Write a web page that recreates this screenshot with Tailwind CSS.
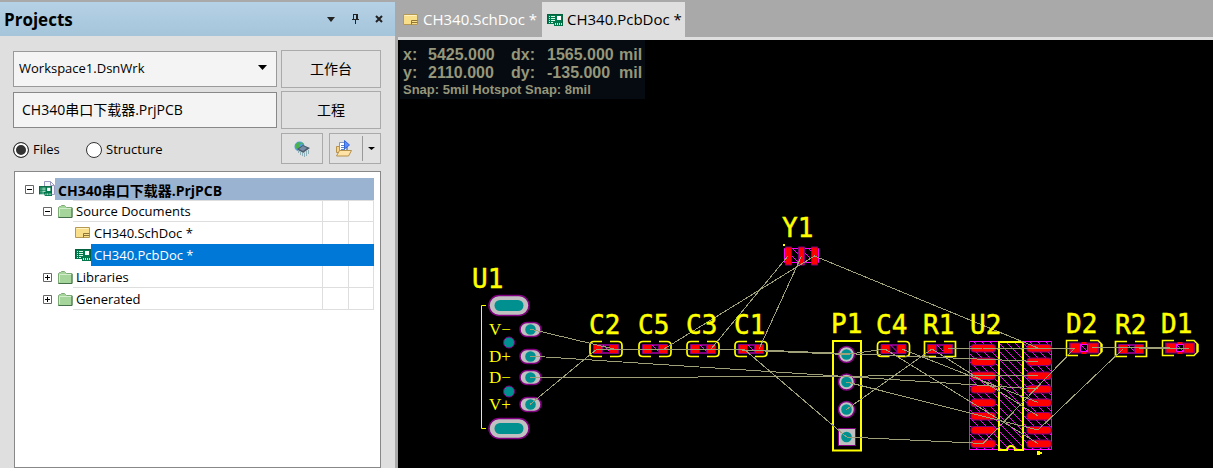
<!DOCTYPE html>
<html lang="zh-CN">
<head>
<meta charset="utf-8">
<title>CH340.PcbDoc</title>
<script src="https://cdn.jsdelivr.net/npm/@tailwindcss/browser@4"></script>
</head>
<body class="bg-[#a9a9a9] font-['Open_Sans','Noto_Sans_CJK_SC',sans-serif] text-black">
<svg class="hidden" aria-hidden="true">
  <symbol id="sch" viewBox="0 0 16 12">
    <path d="M.5.5h14v10H.5z" fill="#fadf8b" stroke="#b59852"/>
    <path d="M1.500 1.500h12" stroke="#fff3c4"/>
    <path d="M8.500 10.500v-4h6M8.500 8.500h6" fill="none" stroke="#8f7637"/>
  </symbol>
  <symbol id="pcb" viewBox="0 0 16 12">
    <path d="M0 0h16v12H7V10H0z" fill="#007a4d"/>
    <path d="M0 .5h16M.5 0v10M15.500 0v12" stroke="#05603d"/>
    <path d="M2 2.500h1M4 2.500h4M2 4.500h1M4 4.500h4M2 6.500h1M4 6.500h4M2 8.500h1M4 8.500h2" stroke="#d9f5e7"/>
    <path d="M10 2h4v4h-4z" fill="#fff"/>
    <path d="M8.500 9v2M10.500 9v2M12.500 9v2M14.500 9v2" stroke="#c5ead8"/>
  </symbol>
  <symbol id="folder" viewBox="0 0 15 13">
    <path d="M.5 12.500v-10l1-1h1l1-1h3l1 1 1 1h5.500v10z" fill="#a5d59b" stroke="#7cab76"/>
    <path d="M1.500 11V3.500h12" fill="none" stroke="#d3eccc"/>
    <path d="M.5 12.500h13.500v-9.500" fill="none" stroke="#46704a"/>
  </symbol>
  <symbol id="minus" viewBox="0 0 9 9"><path d="M.5.5h8v8h-8z" fill="#fff" stroke="#666"/><path d="M2 4.500h5" stroke="#000"/></symbol>
  <symbol id="plus" viewBox="0 0 9 9"><path d="M.5.5h8v8h-8z" fill="#fff" stroke="#666"/><path d="M2 4.500h5M4.500 2v5" stroke="#000"/></symbol>
</svg>

<div class="flex min-h-screen pt-0.5">
  <aside class="flex w-[395px] shrink-0 flex-col bg-[#dfdfdf]">
    <header class="flex h-[34px] items-center bg-linear-to-b from-[#b5d1e6] to-[#a5c5da] pr-2.5 pl-1">
      <h1 class="flex-1 pt-0.5 text-[17px] font-bold">Projects</h1>
      <div class="flex items-center gap-3">
        <button type="button" aria-label="Menu" class="flex size-3 items-center justify-center"><svg class="h-[5px] w-2" viewBox="0 0 8 5"><path d="M0 0h8L4 5z" fill="#222"/></svg></button>
        <button type="button" aria-label="Pin" class="flex size-3 items-center justify-center"><svg class="h-2.5 w-[7px]" viewBox="0 0 7 10"><path d="M1.500 0v5.500M1 .5h5M0 5.500h7M3.500 6v4" fill="none" stroke="#222"/><path d="M5 0v5.500" stroke="#222" stroke-width="2"/></svg></button>
        <button type="button" aria-label="Close" class="flex size-3 items-center justify-center"><svg class="size-2" viewBox="0 0 8 8"><path d="M1 1l6 6M7 1L1 7" stroke="#222" stroke-width="2"/></svg></button>
      </div>
    </header>

    <div class="flex flex-1 flex-col pt-3.5 pr-3.5 pl-[13px]">
      <div class="grid grid-cols-[1fr_100px] items-center gap-x-1 gap-y-[3px]">
        <div class="relative">
          <select aria-label="Workspace" class="h-9 w-full appearance-none border border-[#999] bg-[#f4f4f4] px-[5px] text-[13px]"><option>Workspace1.DsnWrk</option></select>
          <svg class="pointer-events-none absolute top-3.5 right-2.5 h-[5px] w-[9px]" viewBox="0 0 9 5"><path d="M0 0h9L4.500 5z"/></svg>
        </div>
        <button type="button" class="h-[38px] border border-[#aaa] bg-[#e1e1e1] pb-0.5 text-[14px]">工作台</button>
        <input aria-label="Project" value="CH340串口下载器.PrjPCB" class="h-9 w-full border border-[#888] bg-[#f4f4f4] px-2 pb-0.5 text-[14px]">
        <button type="button" class="h-[38px] border border-[#aaa] bg-[#e1e1e1] pb-0.5 text-[14px]">工程</button>
      </div>
      <div class="mt-1 flex items-center">
        <label class="flex w-[73px] items-center gap-1 pt-0.5 text-[13px]"><input type="radio" name="view" checked class="size-4 appearance-none rounded-full border border-[#333] bg-white checked:bg-[#333] checked:shadow-[inset_0_0_0_2px_white]">Files</label>
        <label class="flex flex-1 items-center gap-1 pt-0.5 text-[13px]"><input type="radio" name="view" class="size-4 appearance-none rounded-full border border-[#333] bg-white">Structure</label>
        <button type="button" aria-label="Compile" class="flex h-[31px] w-[42px] items-center justify-center border border-[#aaa] bg-[#e1e1e1]">
          <svg class="h-4 w-[17px]" viewBox="0 0 17 16">
            <circle cx="5.500" cy="5.500" r="5" fill="#4f9fe0"/><path d="M1 4l3-3 3 1-2 3 2 2-3 2-2-2zM8 1l2 2-1 2z" fill="#48b34c"/>
            <path d="M3 8l6-4 7 3-7 5z" fill="#4b5a6e"/><path d="M5 8l4-3 4 2-4 3z" fill="#788da5"/>
            <path d="M4.500 9v3M6.500 10v4M8.500 11.500V15M10.500 11.500V16M12.500 10v5M14.500 9v4" stroke="#8fb0b9"/>
          </svg>
        </button>
        <div class="ml-1.5 flex h-[31px] w-[52px] items-center border border-[#aaa] bg-[#e1e1e1]">
          <button type="button" aria-label="Open" class="flex h-full flex-1 items-center justify-center pr-1">
            <svg class="h-[17px] w-4" viewBox="0 0 16 17">
              <path d="M.5 6.500h3v-3h8v9h-11z" fill="#f5d389" stroke="#b5924d"/><path d="M3.500 2.500h7v10h-7z" fill="#fff" stroke="#8999ba"/>
              <path d="M5 5.500h3M5 7.500h4M5 9.500h4" stroke="#5b82c4"/><path d="M8.500.5l5 4.500-5 4z" fill="#5b8cff" stroke="#3566d8"/>
              <path d="M3.500 10.500h12l-3 5.500H.5z" fill="#ffe2a6" stroke="#b5924d"/>
            </svg>
          </button>
          <button type="button" aria-label="Open options" class="flex h-[25px] w-[18px] items-center justify-center border-l border-[#999]"><svg class="h-[3px] w-[7px]" viewBox="0 0 7 3"><path d="M0 0h7L3.500 3z"/></svg></button>
        </div>
      </div>

      <ul role="tree" class="mt-[7px] ml-px flex-1 border border-[#888] bg-white pt-1.5 pr-1.5 pl-2.5 text-[13px]">
        <li role="treeitem" class="flex h-[22px] items-center">
          <svg class="size-[9px]"><use href="#minus"/></svg>
          <svg class="ml-[5px] h-4 w-4" viewBox="0 0 16 16"><path d="M5.500.5h6l4 4v9h-10z" fill="#f5f5fd" stroke="#9a9abf"/><path d="M11.500.5v4h4" fill="none" stroke="#9a9abf"/><use href="#pcb" x="0" y="5" width="13" height="10"/></svg>
          <span class="flex h-full flex-1 items-center bg-[#9ab3d1] pl-[3px] pt-0.5 text-[14px] font-bold">CH340串口下载器.PrjPCB</span>
        </li>
        <li role="treeitem" class="flex h-[22px] items-center pl-[18px]">
          <svg class="size-[9px]"><use href="#minus"/></svg><svg class="ml-1.5 h-[13px] w-[15px]"><use href="#folder"/></svg>
          <span class="flex h-full flex-1 items-center border-y border-[#dedede] pl-[3px] pt-0.5">Source Documents</span><span class="h-full w-[26px] border-y border-l border-[#dedede]"></span><span class="h-full w-[26px] border border-[#dedede]"></span>
        </li>
        <li role="treeitem" class="flex h-[22px] items-center pl-[50px]">
          <svg class="h-3 w-4"><use href="#sch"/></svg>
          <span class="flex h-full flex-1 items-center pl-[3px] pt-0.5">CH340.SchDoc *</span><span class="h-full w-[26px] border-l border-[#dedede]"></span><span class="h-full w-[26px] border-x border-[#dedede]"></span>
        </li>
        <li role="treeitem" aria-selected="true" class="flex h-[22px] items-center pl-[50px]">
          <svg class="h-3 w-4"><use href="#pcb"/></svg>
          <span class="flex h-full flex-1 items-center bg-[#0078d7] pl-[3px] pt-0.5 text-white">CH340.PcbDoc *</span>
        </li>
        <li role="treeitem" class="flex h-[22px] items-center pl-[18px]">
          <svg class="size-[9px]"><use href="#plus"/></svg><svg class="ml-1.5 h-[13px] w-[15px]"><use href="#folder"/></svg>
          <span class="flex h-full flex-1 items-center border-b border-[#dedede] pl-[3px] pt-0.5">Libraries</span><span class="h-full w-[26px] border-b border-l border-[#dedede]"></span><span class="h-full w-[26px] border-x border-b border-[#dedede]"></span>
        </li>
        <li role="treeitem" class="flex h-[22px] items-center pl-[18px]">
          <svg class="size-[9px]"><use href="#plus"/></svg><svg class="ml-1.5 h-[13px] w-[15px]"><use href="#folder"/></svg>
          <span class="flex h-full flex-1 items-center border-b border-[#dedede] pl-[3px] pt-0.5">Generated</span><span class="h-full w-[26px] border-b border-l border-[#dedede]"></span><span class="h-full w-[26px] border-x border-b border-[#dedede]"></span>
        </li>
      </ul>
    </div>
  </aside>

  <main class="ml-[3px] flex min-w-0 flex-1 flex-col">
    <nav class="flex h-[35px] text-[15px]">
      <button type="button" class="flex w-36 items-center gap-1 pl-[5px] text-white"><svg class="h-3 w-4 shrink-0"><use href="#sch"/></svg><span class="whitespace-nowrap">CH340.SchDoc *</span></button>
      <button type="button" class="flex w-[143px] items-center gap-1 bg-[#dfdfdf] pl-[5px]"><svg class="h-3 w-4 shrink-0"><use href="#pcb"/></svg><span class="whitespace-nowrap">CH340.PcbDoc *</span></button>
    </nav>
    <div class="relative flex-1 border-t-[3px] border-[#dfdfdf] bg-black">
      <svg class="block w-full" viewBox="398 40 815 428" role="img" aria-label="PCB layout">
        <defs>
          <pattern id="hatch" width="8" height="8" patternUnits="userSpaceOnUse"><path d="M-1-1l10 10M7-1l2 2M-1 7l2 2" stroke="#f0f" shape-rendering="crispEdges"/></pattern>
          <g id="core"><path d="M-4-4H4V4H-4z" fill="#000" stroke="#f0f"/><path d="M-3-4L4 3" stroke="#f0f"/><path d="M-12.500-4.500h9v9h-9zM3.500-4.500h9v9h-9z" fill="#f00" stroke="#800080"/></g>
          <g id="cap"><use href="#core"/><path d="M-4-7.500h-8q-4 0-4 4v7q0 4 4 4h8M4-7.500h8q4 0 4 4v7q0 4-4 4H4" fill="none" stroke="#ff0" stroke-width="1.700"/></g>
          <g id="res"><use href="#core"/><path d="M-4-7.500h-11.500v15H-4M4-7.500h11.500v15H4" fill="none" stroke="#ff0" stroke-width="1.700"/></g>
          <g id="led"><path d="M-15-5.500h30v11h-30z" fill="#800080"/><path d="M-13.500-4.500h9v9h-9zM4.500-4.500h9v9h-9zM-2.500-6h5v12h-5z" fill="#f00"/><path d="M-3.500-3.500h7v7h-7z" fill="#000" stroke="#f0f"/><path d="M-4-4L4 4" stroke="#f0f"/><path d="M-6-7.500h-11.500v15H-6M6-7.500h8l3 3v9l-3 3H6M14-7.500l4 4v7l-4 4" fill="none" stroke="#ff0" stroke-width="1.500"/></g>
          <g id="slot"><rect x="-20" y="-10" width="40" height="20" rx="10" fill="#c0c0c0" stroke="#800080" stroke-width="1.500"/><rect x="-14.500" y="-5.500" width="29" height="11" rx="5.500" fill="#009090"/></g>
          <g id="oval"><rect x="-10.500" y="-7" width="21" height="14" rx="7" fill="#c0c0c0" stroke="#800080" stroke-width="1.500"/><circle r="5.300" fill="#009090"/></g>
          <g id="pin"><circle r="8" fill="#c0c0c0" stroke="#800080" stroke-width="1.500"/><circle r="5.300" fill="#009090"/></g>
          <g id="row"><rect x="-40" y="-3.500" width="24.500" height="7.500" rx="3.500" fill="#f00" stroke="#800080" stroke-width="1.200"/><rect x="16" y="-3.500" width="24.500" height="7.500" rx="3.500" fill="#f00" stroke="#800080" stroke-width="1.200"/></g>
        </defs>

        <path d="M486 305.500h-4.500v123h4.500" fill="none" stroke="#ff0"/>
        <use href="#slot" x="509" y="305.500"/><use href="#slot" x="509" y="428.500"/>
        <use href="#oval" x="530.500" y="329.500"/><use href="#oval" x="530.500" y="356.500"/><use href="#oval" x="530.500" y="377.500"/><use href="#oval" x="530.500" y="404.500"/>
        <g fill="#009090" stroke="#800080"><circle cx="509" cy="342.500" r="5.500"/><circle cx="509" cy="391.500" r="5.500"/></g>

        <path d="M784.500 248.500h34v14h-34z" fill="url(#hatch)" stroke="#f0f"/>
        <path d="M785.500 247h6v18h-6zM798.500 247h6v18h-6zM811.500 247h6v18h-6z" fill="#f00" stroke="#800080"/>
        <path d="M783 244h2v2h-2z" fill="#ff0"/>

        <use href="#cap" x="606" y="349"/><use href="#cap" x="655" y="349"/><use href="#cap" x="703" y="349"/><use href="#cap" x="751" y="349"/><use href="#cap" x="893.500" y="349"/>
        <use href="#res" x="940" y="349"/><use href="#res" x="1131" y="349"/>
        <use href="#led" x="1084" y="348"/><use href="#led" x="1180" y="348"/>

        <path d="M833 341h28v109.500h-28z" fill="none" stroke="#ff0" stroke-width="2"/>
        <use href="#pin" x="846.500" y="354.500"/><use href="#pin" x="846.500" y="382"/><use href="#pin" x="846.500" y="409.500"/>
        <path d="M838.500 428.500h17v17h-17z" fill="#c0c0c0" stroke="#800080"/><circle cx="846.500" cy="437" r="5.300" fill="#009090"/>

        <path d="M969.500 341.500h82v108h-82z" fill="url(#hatch)" stroke="#f0f"/>
        <use href="#row" x="1011" y="348"/><use href="#row" x="1011" y="361.500"/><use href="#row" x="1011" y="375.500"/><use href="#row" x="1011" y="389"/><use href="#row" x="1011" y="402.500"/><use href="#row" x="1011" y="416"/><use href="#row" x="1011" y="430"/><use href="#row" x="1011" y="443.500"/>
        <path d="M999 342h24v108h-8a4 4 0 0 0-8 0h-8z" fill="none" stroke="#ff0" stroke-width="2"/>
        <path d="M1037 451h3v1h2v2h-2v1h-3z" fill="#ff0"/>

        <g fill="none" stroke="#a0a078" shape-rendering="crispEdges">
          <path d="M530 329l84 20M530 356l508 33M530 378l508-3M530 404.500l67-55.500M597 349h148M742 350l104.500 4.500L885 349M745 350l101.500 87M759 350l279 11.500"/>
          <path d="M664 349l150.500-93L1038 348M711 349l77-93M759 349l42.500-93"/>
          <path d="M885 349l153 94.500M902 349l136 53.500M846.500 409.500L932 349l106 67M846.500 382l191.500 48 85-81M846.500 437l136.500 6.500L1075 348"/>
          <path d="M948 349l35-1h92M1092 347.500h78M1139 348.500h50"/>
        </g>

        <g fill="#ff0" stroke="#ff0" stroke-width=".5" class="font-['DejaVu_Sans_Mono',monospace] text-[26px]">
          <text x="472" y="288">U1</text><text x="589" y="334">C2</text><text x="638" y="334">C5</text><text x="686" y="334">C3</text><text x="734" y="334">C1</text>
          <text x="782" y="237">Y1</text><text x="831" y="333">P1</text><text x="876" y="334">C4</text><text x="923" y="334">R1</text><text x="970" y="334">U2</text>
          <text x="1066" y="333">D2</text><text x="1115" y="334">R2</text><text x="1161" y="333">D1</text>
        </g>
        <g fill="#ff0" class="font-['Liberation_Serif',serif] text-[17px]">
          <text x="489" y="335">V−</text><text x="489" y="362">D+</text><text x="489" y="383">D−</text><text x="489" y="410">V+</text>
        </g>
      </svg>
      <div class="absolute top-0 left-0.5 w-[245px] bg-[#050b10] pt-1.5 pb-0.5 pl-[3px] font-['Liberation_Sans',sans-serif] font-bold text-[#96967a]">
        <div class="grid grid-cols-[25px_83px_36px_72px_1fr] text-[16px] leading-[18px]">
          <span>x:</span><span>5425.000</span><span>dx:</span><span>1565.000</span><span>mil</span>
          <span>y:</span><span>2110.000</span><span>dy:</span><span>-135.000</span><span>mil</span>
        </div>
        <p class="text-[13px] leading-[15px]">Snap: 5mil Hotspot Snap: 8mil</p>
      </div>
    </div>
  </main>
</div>
</body>
</html>
